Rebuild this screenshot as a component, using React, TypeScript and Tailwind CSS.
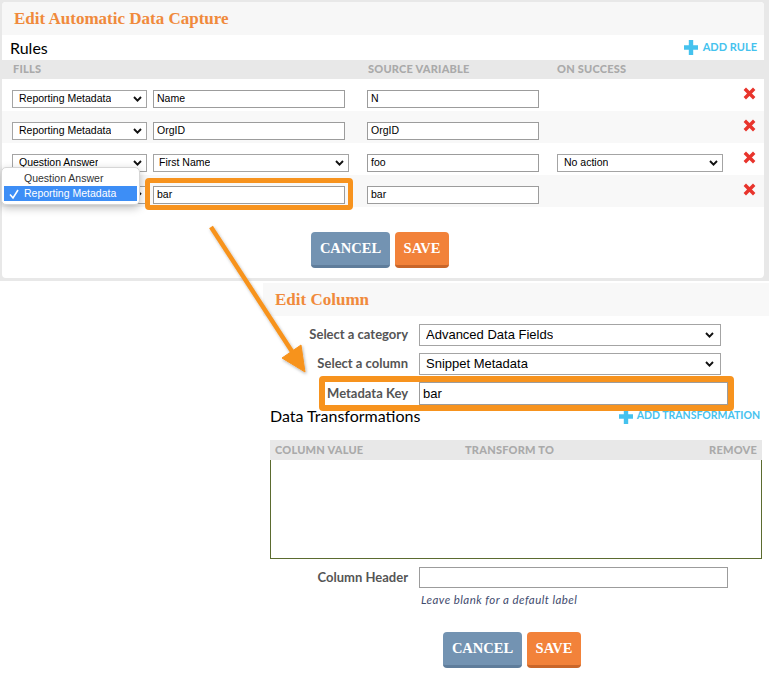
import React from 'react';

// shared pieces
function Chevron({ size = 9 }: { size?: number }) {
  return (
    <svg width={size} height={Math.round(size * 0.65)} viewBox="0 0 9 6" className="shrink-0">
      <polyline points="1,1 4.5,4.6 8,1" fill="none" stroke="#111" strokeWidth="1.9" />
    </svg>
  );
}

function SelectBox({ value, className }: { value: string; className: string }) {
  return (
    <div className={`flex items-center justify-between border border-[#a4a4a4] bg-white ${className}`}>
      <span className="truncate">{value}</span>
      <Chevron />
    </div>
  );
}

function TextBox({ value, className }: { value: string; className: string }) {
  return <div className={`flex items-center border border-[#9c9c9c] bg-white ${className}`}>{value}</div>;
}

function RemoveX() {
  return (
    <svg width="13" height="13" viewBox="0 0 13 13">
      <path d="M1.8 1.8L11.2 11.2M11.2 1.8L1.8 11.2" stroke="#e8342c" strokeWidth="3.4" />
    </svg>
  );
}

function Plus() {
  return (
    <svg width="14" height="15" viewBox="0 0 14 15">
      <path d="M7 0V15M0 7.5H14" stroke="#45c2ee" strokeWidth="4.4" />
    </svg>
  );
}

function Buttons() {
  return (
    <div className="flex gap-[5px] font-['Liberation_Serif',serif] text-[14.5px] font-bold text-white">
      <button className="h-[36px] w-[79px] rounded-[4px] border-b-[3px] border-[#5f7d9b] bg-[#7393b2]">CANCEL</button>
      <button className="h-[36px] w-[54px] rounded-[4px] border-b-[3px] border-[#c9662a] bg-[#f2823a]">SAVE</button>
    </div>
  );
}

// last row's select sits under the open popup, so its label is not shown
const rules = [
  { fill: 'Reporting Metadata', name: 'Name', nameSelect: false, source: 'N', onSuccess: '' },
  { fill: 'Reporting Metadata', name: 'OrgID', nameSelect: false, source: 'OrgID', onSuccess: '' },
  { fill: 'Question Answer', name: 'First Name', nameSelect: true, source: 'foo', onSuccess: 'No action' },
  { fill: '', name: 'bar', nameSelect: false, source: 'bar', onSuccess: '' },
];

export default function App() {
  return (
    <div className="relative h-[678px] w-[769px] overflow-hidden bg-white font-['Lato',sans-serif] text-black">
      {/* Edit Automatic Data Capture */}
      <div className="bg-[#e8e8e8] pb-[3px] pl-[2px] pr-[5px] pt-[2px]">
        <div className="h-[276px] rounded-[4px] bg-white">
          <div className="flex h-[33px] items-center rounded-t-[4px] bg-[#f7f7f7] pl-[12px] font-['Liberation_Serif',serif] text-[17px] font-bold text-[#f08a3c]">
            Edit Automatic Data Capture
          </div>
          <div className="flex h-[25px] items-center justify-between pl-[8px] pr-[7px]">
            <span className="text-[16px]">Rules</span>
            <span className="flex items-center gap-[5px] text-[11px] font-bold text-[#45c2ee]">
              <Plus />
              ADD RULE
            </span>
          </div>
          <div className="flex h-[19px] items-center bg-[#e8e8e8] text-[11px] font-black tracking-[0.02em] text-[#aaaaaa]">
            <span className="w-[366px] pl-[11px]">FILLS</span>
            <span className="w-[189px]">SOURCE VARIABLE</span>
            <span>ON SUCCESS</span>
          </div>
          {rules.map((r, i) => (
            <div
              key={i}
              className={`flex h-[32px] items-center pl-[10px] pr-[8px] pt-[7px] font-['Liberation_Sans',Arial,sans-serif] text-[10.5px] ${i % 2 === 1 ? 'bg-[#f8f8f8]' : 'bg-white'}`}
            >
              <SelectBox value={r.fill} className="h-[18px] w-[135px] pl-[6px] pr-[4px]" />
              {r.nameSelect ? (
                <SelectBox value={r.name} className="ml-[6px] h-[18px] w-[196px] pl-[5px] pr-[4px]" />
              ) : (
                <TextBox value={r.name} className="ml-[6px] mr-[4px] h-[18px] w-[192px] pl-[3px]" />
              )}
              <TextBox value={r.source} className="ml-[18px] h-[18px] w-[172px] pl-[3px]" />
              {r.onSuccess ? (
                <SelectBox value={r.onSuccess} className="ml-[18px] h-[18px] w-[166px] pl-[6px] pr-[4px]" />
              ) : (
                <div className="ml-[18px] w-[166px]" />
              )}
              <div className="ml-auto -mt-[11px]">
                <RemoveX />
              </div>
            </div>
          ))}
          <div className="ml-[309px] mt-[25px]">
            <Buttons />
          </div>
        </div>
      </div>

      {/* Edit Column */}
      <div className="ml-[263px] w-[506px] pt-[2px]">
        <div className="flex h-[33px] items-center bg-[#f8f8f8] pl-[12px] font-['Liberation_Serif',serif] text-[17px] font-bold text-[#f08a3c]">
          Edit Column
        </div>
        <div className="mt-[8px] grid grid-cols-[145px_1fr] items-center gap-x-[11px] gap-y-[7px] text-[13px] font-bold text-[#555]">
          <span className="text-right">Select a category</span>
          <SelectBox value="Advanced Data Fields" className="h-[22px] w-[302px] pl-[6px] pr-[6px] font-['Liberation_Sans',Arial,sans-serif] text-[13px] font-normal text-black" />
          <span className="text-right">Select a column</span>
          <SelectBox value="Snippet Metadata" className="h-[22px] w-[302px] pl-[6px] pr-[6px] font-['Liberation_Sans',Arial,sans-serif] text-[13px] font-normal text-black" />
          <span className="text-right">Metadata Key</span>
          <TextBox value="bar" className="h-[23px] w-[309px] pl-[3px] font-['Liberation_Sans',Arial,sans-serif] text-[13px] font-normal text-black" />
        </div>

        <div className="ml-[7px] w-[492px]">
          <div className="mt-[1px] flex h-[20px] items-center justify-between">
            <span className="text-[16px]">Data Transformations</span>
            <span className="mr-[2px] flex items-center gap-[4px] text-[10.5px] font-bold text-[#45c2ee]">
              <Plus />
              ADD TRANSFORMATION
            </span>
          </div>
          <div className="mt-[14px] flex h-[20px] items-center justify-between bg-[#e8e8e8] px-[5px] text-[11px] font-black tracking-[0.02em] text-[#aaaaaa]">
            <span className="w-[190px]">COLUMN VALUE</span>
            <span className="flex-1">TRANSFORM TO</span>
            <span>REMOVE</span>
          </div>
          <div className="h-[99px] border border-t-0 border-[#5b6b2f]" />
        </div>

        <div className="mt-[8px] grid grid-cols-[145px_1fr] items-center gap-x-[11px] text-[13px] font-bold text-[#555]">
          <span className="text-right">Column Header</span>
          <TextBox value="" className="h-[21px] w-[309px]" />
          <span />
          <span className="mt-[3px] pl-[2px] text-[11.5px] font-normal italic tracking-[0.04em] text-[#3f4b6e]">Leave blank for a default label</span>
        </div>

        <div className="ml-[180px] mt-[24px]">
          <Buttons />
        </div>
      </div>

      {/* native dropdown popup */}
      <div className="absolute left-[1px] top-[167px] h-[38px] w-[139px] rounded-[5px] border border-[#d6d6d6] bg-white py-[3px] font-['Liberation_Sans',Arial,sans-serif] text-[10.5px] text-[#333] shadow-[0_3px_8px_rgba(0,0,0,0.25)]">
        <div className="flex h-[15px] items-center pl-[22px]">Question Answer</div>
        <div className="mx-[2px] flex h-[15px] items-center bg-[#3d8ef6] text-white">
          <svg width="20" height="12" viewBox="0 0 20 12" className="shrink-0">
            <polyline points="6,6.5 9,10 14,2" fill="none" stroke="#fff" strokeWidth="1.6" />
          </svg>
          Reporting Metadata
        </div>
      </div>

      {/* highlight boxes */}
      <div className="pointer-events-none absolute left-[145px] top-[178px] h-[32px] w-[208px] rounded-[4px] border-[5px] border-[#f7931e]" />
      <div className="pointer-events-none absolute left-[319px] top-[376px] h-[35px] w-[415px] rounded-[4px] border-[6px] border-[#f7931e]" />

      {/* arrow */}
      <svg className="pointer-events-none absolute left-0 top-0" width="769" height="678">
        <defs>
          <filter id="sh" x="-20%" y="-20%" width="140%" height="140%">
            <feDropShadow dx="1" dy="1.5" stdDeviation="1.5" floodColor="#000" floodOpacity="0.3" />
          </filter>
        </defs>
        <g filter="url(#sh)" fill="#f7931e" stroke="#f7931e">
          <line x1="211" y1="227" x2="293" y2="353" strokeWidth="4.5" />
          <polygon points="305,372 282,358 301,345" strokeWidth="1" strokeLinejoin="miter" />
        </g>
      </svg>
    </div>
  );
}
